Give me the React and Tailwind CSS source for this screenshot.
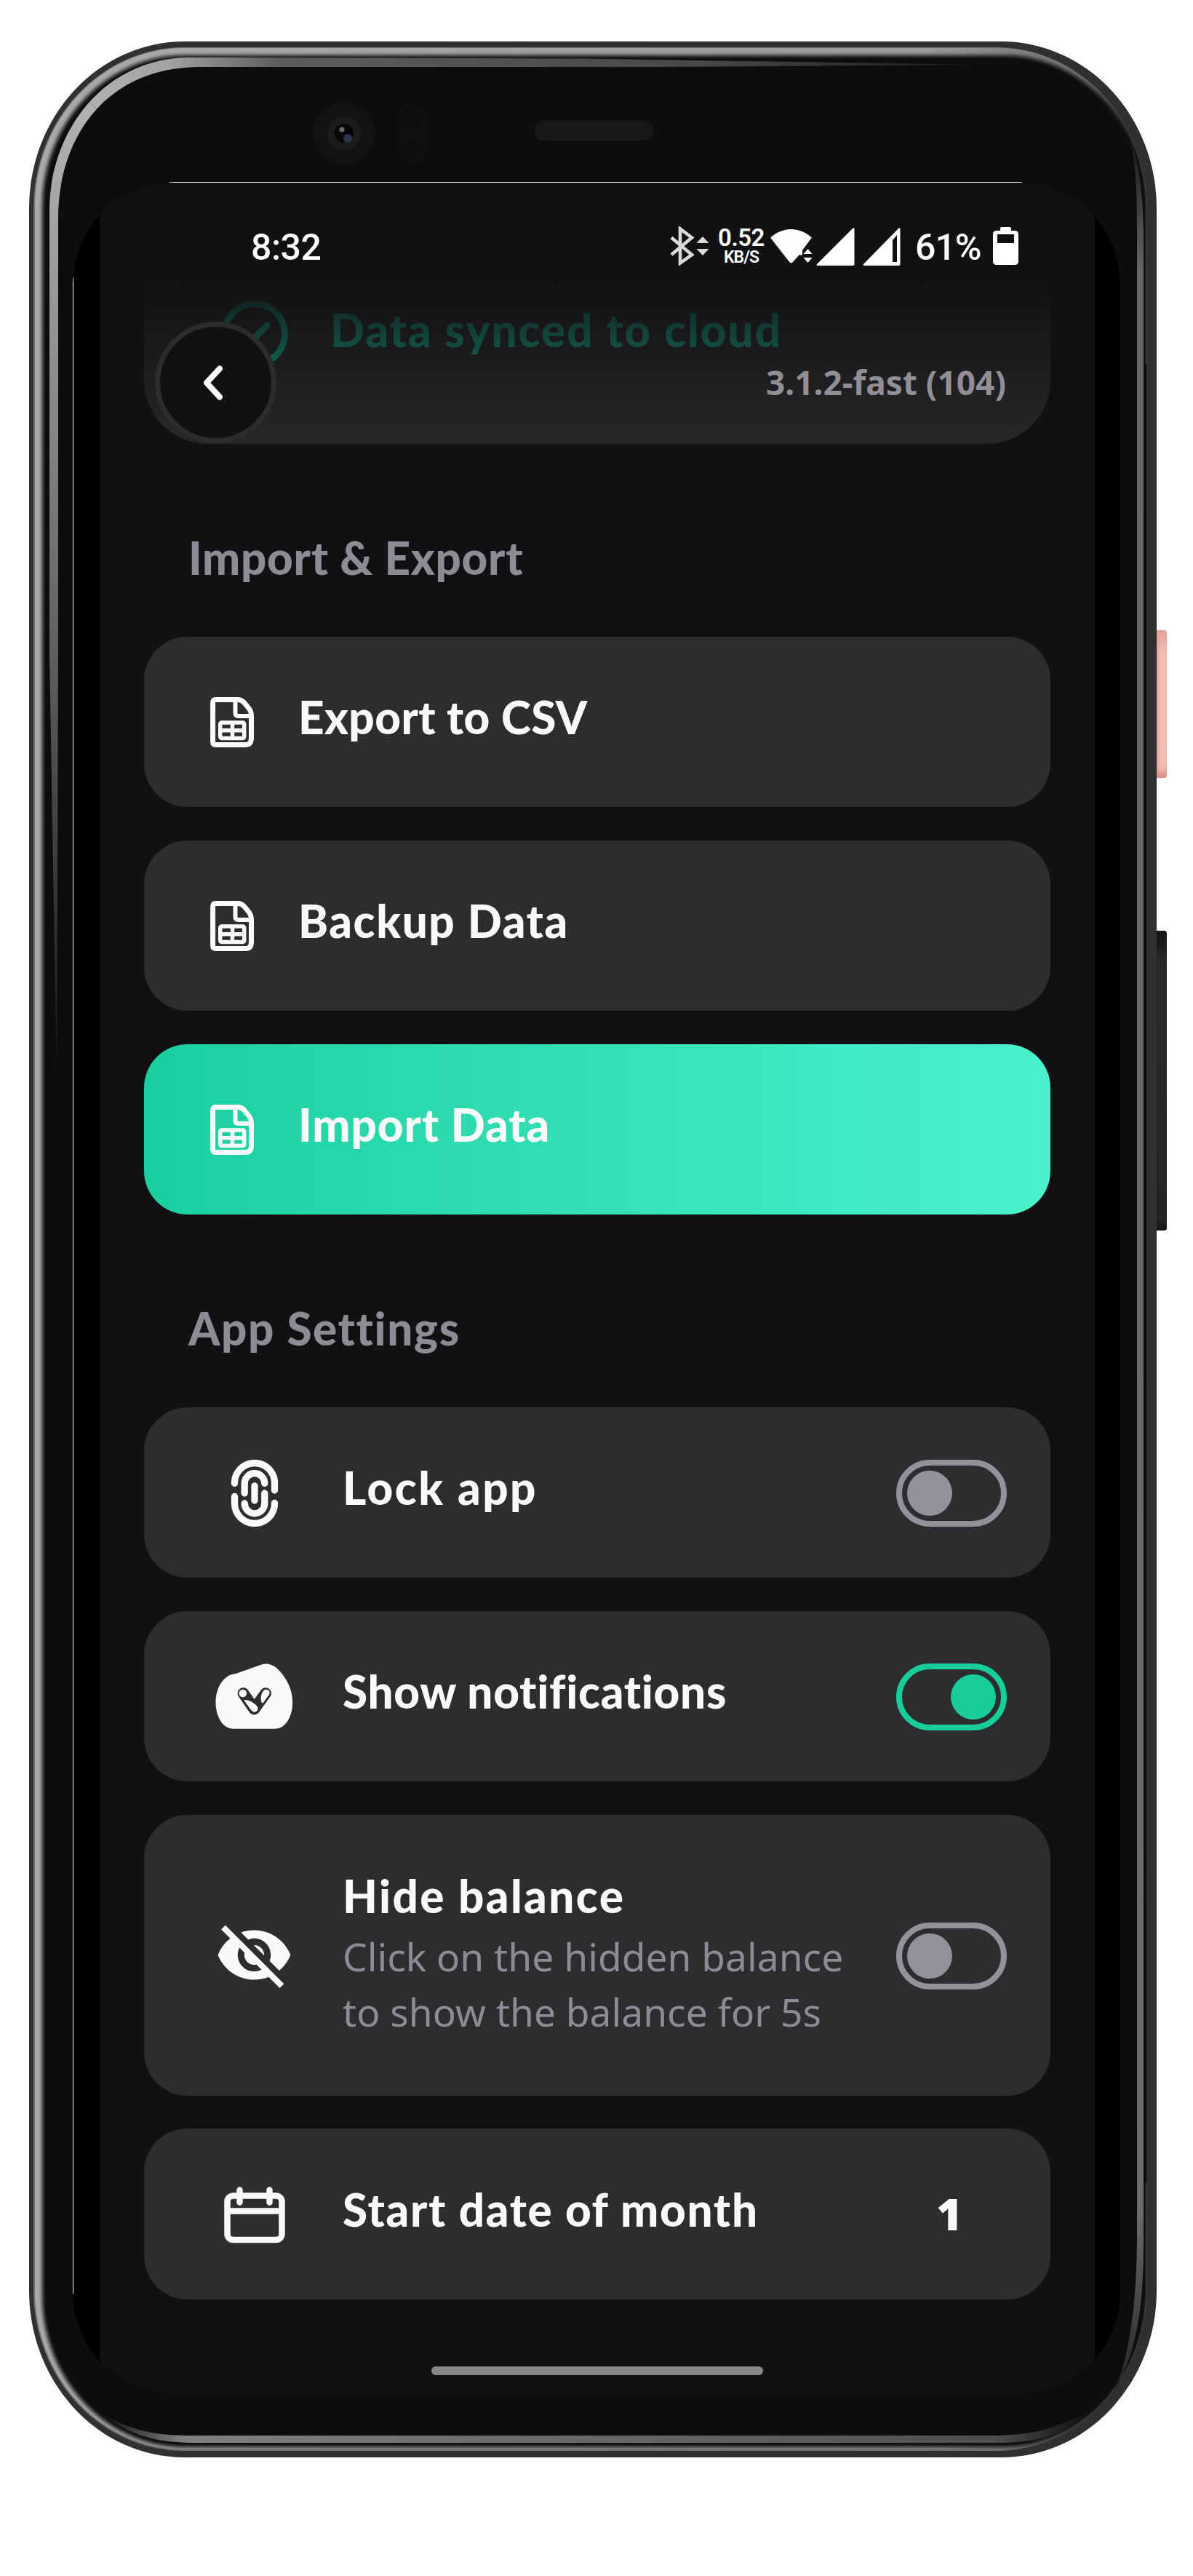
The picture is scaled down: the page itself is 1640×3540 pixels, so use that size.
import React from "react";
import { MdVisibilityOff } from "react-icons/md";

function Bezel() {
  const band =
    "M1345 89L800 80.500L300 79H262C145 79 68 178 68 290V900L78 1480L80 900V300C80 190 145 92 275 92H900Z";
  return (
    <svg className="absolute inset-0 h-full w-full" viewBox="40 57 1550 3320" preserveAspectRatio="none">
      <defs>
        <linearGradient id="rim" gradientUnits="userSpaceOnUse" x1="46" y1="0" x2="1576" y2="0">
          <stop offset="0" stopColor="#aaaaaa" />
          <stop offset="0.8" stopColor="#9a9a9a" />
          <stop offset="0.95" stopColor="#6a6a6a" />
          <stop offset="1" stopColor="#141416" />
        </linearGradient>
        <linearGradient id="bandTop" gradientUnits="userSpaceOnUse" x1="80" y1="0" x2="1345" y2="0">
          <stop offset="0" stopColor="#b8b8b8" />
          <stop offset="0.12" stopColor="#a2a2a2" />
          <stop offset="0.24" stopColor="#5c5c5c" />
          <stop offset="0.7" stopColor="#484848" />
          <stop offset="1" stopColor="#1a1a1c" />
        </linearGradient>
        <linearGradient id="bandLeft" gradientUnits="userSpaceOnUse" x1="0" y1="100" x2="0" y2="1480">
          <stop offset="0" stopColor="#b8b8b8" />
          <stop offset="0.35" stopColor="#858585" />
          <stop offset="1" stopColor="#18181a" />
        </linearGradient>
        <linearGradient id="bandRight" gradientUnits="userSpaceOnUse" x1="0" y1="180" x2="0" y2="3350">
          <stop offset="0" stopColor="#111113" />
          <stop offset="0.06" stopColor="#666666" />
          <stop offset="0.9" stopColor="#6c6c6d" />
          <stop offset="1" stopColor="#111113" />
        </linearGradient>
        <linearGradient id="bandBottom" gradientUnits="userSpaceOnUse" x1="140" y1="0" x2="1500" y2="0">
          <stop offset="0" stopColor="#0d0d0f" />
          <stop offset="0.08" stopColor="#808080" />
          <stop offset="0.9" stopColor="#505050" />
          <stop offset="1" stopColor="#0d0d0f" />
        </linearGradient>
        <filter id="soft" x="-2%" y="-2%" width="104%" height="104%">
          <feGaussianBlur stdDeviation="2.500" />
        </filter>
        <clipPath id="innerRim">
          <rect x="46" y="65" width="1530" height="3303" rx="207" ry="221" />
        </clipPath>
        <clipPath id="upper">
          <path d="M40 57L440 457H1590V57Z" />
        </clipPath>
        <clipPath id="lower">
          <path d="M40 57L440 457V1600H40Z" />
        </clipPath>
      </defs>
      <rect x="40" y="57" width="1550" height="3320" rx="213" ry="229" fill="#303030" />
      <rect x="46" y="65" width="1530" height="3303" rx="207" ry="221" fill="#747474" />
      <rect x="48" y="66" width="1527" height="3300" rx="205" ry="219" fill="url(#rim)" />
      <g clipPath="url(#innerRim)">
        <rect x="58" y="76" width="1517" height="3287" rx="195" ry="209" fill="#0b0b0d" filter="url(#soft)" />
        <path d="M1573 500V3000" stroke="#0b0b0d" strokeWidth="6" />
      </g>
      <path d={band} fill="url(#bandTop)" clipPath="url(#upper)" />
      <path d={band} fill="url(#bandLeft)" clipPath="url(#lower)" />
      <path d="M1550 180C1562 220 1563 260 1563 320V3080C1562 3180 1550 3260 1520 3310C1562 3240 1572 3180 1572 3080V320C1571 260 1565 220 1550 180Z" fill="url(#bandRight)" />
      <path d="M140 3316C180 3342 220 3347 260 3347H1360C1420 3347 1450 3338 1500 3312C1460 3350 1420 3357 1370 3357H270C210 3357 175 3345 140 3316Z" fill="url(#bandBottom)" />
      <ellipse cx="473" cy="183" rx="43" ry="43" fill="#121212" />
      <circle cx="473" cy="183" r="23" fill="#1b1b1e" />
      <circle cx="473" cy="183" r="13" fill="#060608" />
      <circle cx="478" cy="190" r="6" fill="#2d3450" />
      <circle cx="470" cy="178" r="3.500" fill="#6a6a6c" />
      <rect x="548" y="143" width="37" height="82" rx="18" fill="#111111" />
      <circle cx="566" cy="162" r="14" fill="#0e0e0e" />
      <circle cx="566" cy="206" r="14" fill="#0e0e0e" />
      <rect x="735.500" y="166.500" width="162" height="26" rx="12" fill="#171717" stroke="#1e1e1e" />
    </svg>
  );
}

function StatusIcons() {
  return (
    <div className="flex items-center font-[Roboto] text-white">
      <svg className="h-[54px] w-[54px]" viewBox="921 311 54 54" fill="none">
        <path d="M923 326.500L951 350L935 361.500V314.500L951 326.500L923 350" stroke="#dadada" strokeWidth="4.600" />
        <path d="M957.500 334L966 325L974.500 334ZM957.500 342L966 351L974.500 342Z" fill="#dadada" />
      </svg>
      <div className="ml-[11px] flex w-[66px] flex-col items-center font-semibold">
        <span className="text-[33px] leading-[31px] tracking-[-0.5px]">0.52</span>
        <span className="text-[23px] leading-[23px] tracking-[-1px]">KB/S</span>
      </div>
      <svg className="ml-[6px] h-[54px] w-[180px]" viewBox="1058 311 180 54" fill="#fff">
        <path d="M1059 326.500C1076 311 1099 311 1116 326.500L1103 344V351L1099 350L1089.500 360.500Q1087.500 362.500 1085.500 360.500Z" />
        <path d="M1104.500 349L1110.500 342L1116.500 349ZM1104.500 354L1110.500 361L1116.500 354Z" />
        <path d="M1123 363L1172 314Q1174.500 312 1174.500 315V363Q1174.500 365 1172.500 365H1124Q1122 365 1123 363Z" />
        <path fillRule="evenodd" d="M1187 363L1235 314Q1237.500 312 1237.500 315V363Q1237.500 365 1235.500 365H1188Q1186 365 1187 363ZM1227 330V360H1233V323Z" />
      </svg>
      <span className="ml-[20px] w-[96px] pt-[3px] text-[50px] leading-[50px] font-medium tracking-[-1px]">61%</span>
      <svg className="ml-[11px] h-[52px] w-[35px]" viewBox="0 0 35 52">
        <path fillRule="evenodd" fill="#fff" d="M10 5V2Q10 0 12 0H23Q25 0 25 2V5H30Q35 5 35 10V47Q35 52 30 52H5Q0 52 0 47V10Q0 5 5 5ZM6 10V22H29V10Z" />
      </svg>
    </div>
  );
}

function FileIcon() {
  return (
    <svg className="mt-[2px] h-[69px] w-[60px]" viewBox="0 0 60 69" fill="none" stroke="#fafafa">
      <path d="M7.500 3.600H38Q43 3.600 47 8L52 14Q56.500 19 56.500 26V56Q56.500 65.500 49 65.500H7.500Q3.600 65.500 3.600 61V8Q3.600 3.600 7.500 3.600Z" strokeWidth="7" />
      <path d="M34.500 5V22Q34.500 26 38.500 26H56" strokeWidth="6" />
      <rect x="13.700" y="35" width="33" height="21.500" rx="2" strokeWidth="5.500" />
      <path d="M30.500 35V56M13 45.800H47" strokeWidth="5.500" />
    </svg>
  );
}

function FingerprintIcon() {
  return (
    <svg className="mt-[2px] h-[92px] w-[66px]" viewBox="0 0 66 92" fill="none" stroke="#fafafa" strokeWidth="9.300" strokeLinecap="round">
      <path d="M5.500 32.500V32A27.500 27.500 0 0 1 60.500 32V42" />
      <path d="M5.500 50.500V60A27.500 27.500 0 0 0 60.500 60V59.500" />
      <path d="M19.200 46V32.500A13.800 13.800 0 0 1 46.800 32.500" />
      <path d="M46.800 46V60A13.800 13.800 0 0 1 19.200 60" />
      <path d="M33 36V56" />
    </svg>
  );
}

function NotificationIcon() {
  return (
    <svg className="mt-px h-[90px] w-[107px]" viewBox="0 0 320 270">
      <path d="M75 269C25 269 1 210 1 161C1 105 30 46 84 42L188 5C235 -10 262 25 285 56C308 92 318 125 318 161C318 215 292 269 244 269Z" fill="#fafafa" />
      <path d="M115 123L160 188L207 123" fill="none" stroke="#2c2d2f" strokeWidth="47" strokeLinecap="round" strokeLinejoin="round" />
      <circle cx="113" cy="123" r="16" fill="#fafafa" />
      <path d="M210 107C223 107 226 120 221 129L195 164C187 160 186 145 189 131C192 117 200 107 210 107Z" fill="#fafafa" />
      <path d="M118 150C142 150 165 165 174 180C179 194 166 204 154 198C146 192 140 183 118 152Z" fill="#fafafa" />
    </svg>
  );
}

function CalendarIcon() {
  return (
    <svg className="mt-[3px] h-[78px] w-[84px]" viewBox="0 0 84 78" fill="none" stroke="#fafafa" strokeWidth="8.500" strokeLinecap="round">
      <rect x="4.500" y="12.500" width="75" height="60.500" rx="8" />
      <path d="M5 33.500H79" strokeLinecap="butt" />
      <path d="M21.500 4.500V21.500M62.500 4.500V21.500" />
    </svg>
  );
}

function SectionTitle({ children, tracking }) {
  return (
    <h2 className={"flex h-[264.500px] items-center pt-[48px] pl-[61px] text-[62px] leading-[72px] font-black text-[#8e8b94] " + tracking}>
      {children}
    </h2>
  );
}

function FileRow({ label, active, tracking }) {
  return (
    <div
      className={
        active
          ? "flex h-[234.500px] items-center gap-[61px] rounded-[60px] bg-linear-to-r from-[#18cfa0] to-[#49f2cc] pl-[91px]"
          : "flex h-[234.500px] items-center gap-[61px] rounded-[60px] bg-[#2c2d2f] pl-[91px]"
      }
    >
      <FileIcon />
      <span className={"pb-[13px] text-[62px] leading-[72px] font-black text-[#fafafa] " + tracking}>{label}</span>
    </div>
  );
}

function Toggle({ on }) {
  return on ? (
    <div className="mt-[3px] flex h-[92px] w-[152px] items-center justify-end rounded-full border-8 border-[#18cc9b] px-[7px]">
      <div className="size-[62px] rounded-full bg-[#18cc9b]" />
    </div>
  ) : (
    <div className="mt-[3px] flex h-[92px] w-[152px] items-center rounded-full border-8 border-[#94919a] px-[7px]">
      <div className="size-[62px] rounded-full bg-[#94919a]" />
    </div>
  );
}

function SettingRow({ icon, label, tracking, note, tall, children }) {
  return (
    <div
      className={
        tall
          ? "flex h-[386px] items-center rounded-[60px] bg-[#2c2d2f] pr-[60px] pl-[61px]"
          : "flex h-[234.500px] items-center rounded-[60px] bg-[#2c2d2f] pr-[60px] pl-[61px]"
      }
    >
      <div className="flex w-[181px] shrink-0 justify-center">{icon}</div>
      <div className={tall ? "ml-[31px] flex-1 pb-[3px]" : "ml-[31px] flex-1 pb-[13px]"}>
        <div className={"text-[62px] leading-[76px] font-black whitespace-nowrap text-[#fafafa] " + tracking}>{label}</div>
        {note}
      </div>
      {children}
    </div>
  );
}

export default function App() {
  return (
    <div className="h-[3540px] w-[1640px] overflow-hidden bg-white pt-[57px] pl-[40px] font-[Lato,sans-serif]">
      <div className="relative h-[3320px] w-[1550px] pt-[193px] pl-[60px]">
        <div className="absolute top-[809px] left-[1550px] h-[203px] w-[14px] rounded-r-[4px] bg-linear-to-b from-[#e5a096] via-[#f4bfb3] via-15% to-[#f3bdb2] shadow-[inset_0_-14px_10px_-6px_#d98f86,inset_5px_0_4px_-3px_#d9a59c]" />
        <div className="absolute top-[1222px] left-[1550px] h-[412px] w-[14px] rounded-r-[4px] bg-linear-to-b from-[#121212] via-[#2b2b2b] via-10% to-[#252525] shadow-[inset_0_-12px_10px_-4px_#161616]" />
        <Bezel />
        <div className="relative h-[3040px] w-[1440px] overflow-hidden rounded-[140px] bg-black pt-px pl-px">
          <div className="absolute top-0 left-[132px] h-px w-[1173px] bg-white" />
          <div className="absolute top-[131px] left-0 h-[2771px] w-px bg-white" />
          <div className="ml-[36px] flex h-full w-[1368px] flex-col bg-[#111113]">
            <div className="flex h-[134px] items-center justify-between pt-[40px] pr-[105px] pl-[208px]">
              <span className="pt-[4px] font-[Roboto] text-[50px] leading-[50px] font-medium tracking-[-0.5px] text-white">8:32</span>
              <StatusIcons />
            </div>
            <div className="px-[61px]">
              <div className="relative h-[225px] overflow-hidden rounded-b-[88px] bg-[#2c2d2f]">
                <div className="flex pt-[27px] pl-[105px]">
                  <svg className="size-[94px]" viewBox="0 0 94 94" fill="none" stroke="#18cc9b" strokeWidth="8.700" strokeLinecap="round" strokeLinejoin="round">
                    <circle cx="47" cy="47" r="41.500" />
                    <path d="M30 49L41 59L64 35" />
                  </svg>
                  <span className="ml-[57px] pt-px text-[62px] leading-[80px] font-black tracking-[2px] whitespace-nowrap text-[#18cc9b]">Data synced to cloud</span>
                </div>
                <div className="absolute inset-0 bg-linear-to-b from-[#111113] to-[#111113]/20" />
                <div className="absolute right-[61px] bottom-[54px] font-['Noto_Sans'] text-[46px] leading-[62px] font-bold text-[#918e96]">3.1.2-fast (104)</div>
              </div>
              <div className="absolute top-[192px] left-[113px] flex size-[167px] items-center justify-center rounded-full border-[7.500px] border-[#2b2c2e] bg-[#111113]">
                <svg className="mr-[8px] h-[48px] w-[28px]" viewBox="0 0 28 48" fill="none" stroke="#fafafa" strokeWidth="8" strokeLinecap="round" strokeLinejoin="round">
                  <path d="M23 4.500L5 24L23 43.500" />
                </svg>
              </div>

              <SectionTitle tracking="tracking-[0.7px]">Import &amp; Export</SectionTitle>
              <div className="flex flex-col gap-[45.500px]">
                <FileRow label="Export to CSV" tracking="tracking-[0.4px]" />
                <FileRow label="Backup Data" tracking="tracking-[1.6px]" />
                <FileRow label="Import Data" tracking="tracking-[0.9px]" active />
              </div>

              <SectionTitle tracking="tracking-[1.6px]">App Settings</SectionTitle>
              <div className="flex flex-col gap-[45.500px]">
                <SettingRow icon={<FingerprintIcon />} label="Lock app" tracking="tracking-[2.500px]">
                  <Toggle />
                </SettingRow>
                <SettingRow icon={<NotificationIcon />} label="Show notifications" tracking="tracking-[0.7px]">
                  <Toggle on />
                </SettingRow>
                <SettingRow
                  tall
                  icon={<MdVisibilityOff size={109} color="#fafafa" />}
                  label="Hide balance"
                  tracking="tracking-[2.400px]"
                  note={
                    <div className="pt-[8px] font-['Noto_Sans'] text-[53.300px] leading-[76px] whitespace-nowrap text-[#8e8b94]">
                      Click on the hidden balance
                      <br />
                      to show the balance for 5s
                    </div>
                  }
                >
                  <Toggle />
                </SettingRow>
                <SettingRow icon={<CalendarIcon />} label="Start date of month" tracking="tracking-[1.700px]">
                  <div className="flex w-[152px] justify-center pr-[6px] font-['Open_Sans'] text-[61px] leading-[72px] font-extrabold text-[#fafafa]">1</div>
                </SettingRow>
              </div>
            </div>
            <div className="mx-auto mt-[92px] h-[12px] w-[456px] rounded-full bg-[#88888a]" />
          </div>
        </div>
      </div>
    </div>
  );
}
